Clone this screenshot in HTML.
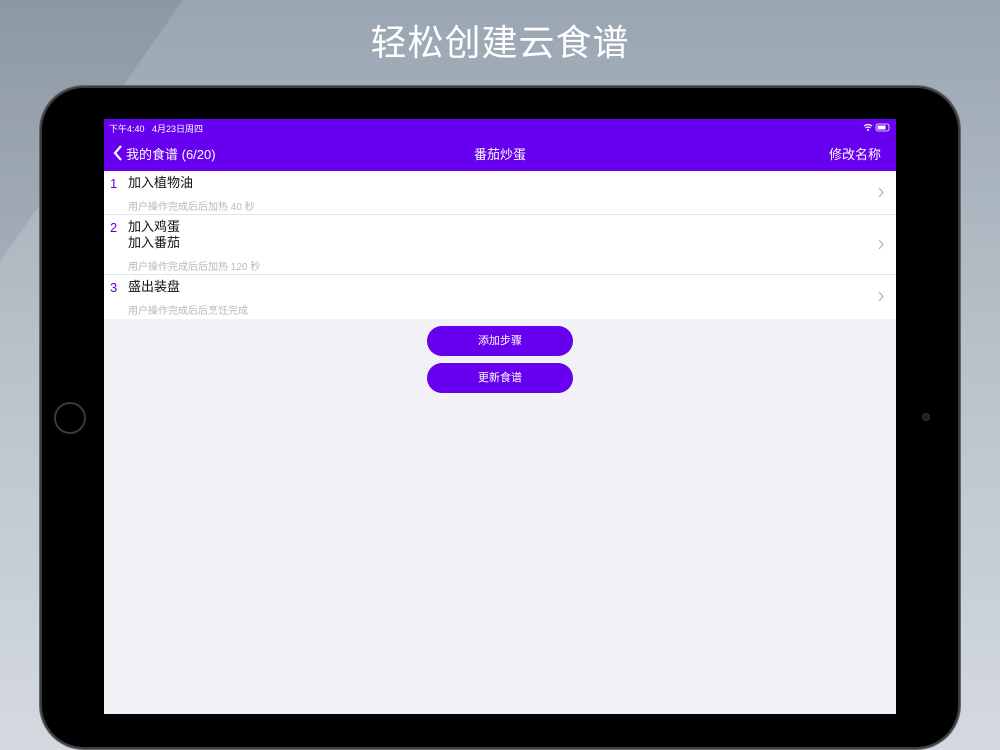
<!DOCTYPE html>
<html><head><meta charset="utf-8"><style>
*{margin:0;padding:0;box-sizing:border-box}
html,body{width:1000px;height:750px;overflow:hidden}
body{position:relative;font-family:"Liberation Sans","Noto Sans CJK SC",sans-serif;background:linear-gradient(180deg,#95a2ae 0%,#b4bec7 45%,#d2d8de 100%)}
.diag{position:absolute;left:0;top:0;width:1000px;height:750px;background:linear-gradient(125deg,rgba(0,0,0,0.06) 0,rgba(0,0,0,0.06) 12%,rgba(255,255,255,0.04) 12%,rgba(255,255,255,0.04) 100%)}
.title{position:absolute;top:14px;width:100%;text-align:center;color:#fff;font-size:36px;letter-spacing:1px}
.tab{position:absolute;left:40px;top:86px;width:920px;height:663px;background:#000;border-radius:44px;border:2px solid #3a3d42;box-shadow:0 0 0 1px #666}
.home{position:absolute;left:54px;top:402px;width:32px;height:32px;border-radius:50%;border:2px solid #3a3a3a}
.cam{position:absolute;left:922px;top:413px;width:8px;height:8px;border-radius:50%;background:#1a1f2a;border:1px solid #333}
.screen{position:absolute;left:104px;top:119px;width:792px;height:595px;background:#f1f1f6;overflow:hidden}
.nav{height:52px;background:#6600ee;color:#fff;position:relative}
.sb{position:absolute;top:3px;left:5px;font-size:9px}
.nav .l{position:absolute;left:22px;top:25px;font-size:13px}
.nav .c{position:absolute;width:100%;text-align:center;top:25px;font-size:13px}
.nav .r{position:absolute;right:15px;top:25px;font-size:13px}
.row{background:#fff;position:relative;border-bottom:1px solid #e4e4e8}
.num{position:absolute;left:6px;top:5px;color:#6600ee;font-size:13px}
.t{position:absolute;left:24px;top:4px;font-size:13px;color:#111;line-height:16px}
.s{position:absolute;left:24px;font-size:10px;color:#b8b8bc}
.chev{position:absolute;right:12px}
.btn{position:absolute;left:323px;width:146px;height:30px;border-radius:15px;background:#6600ee;color:#fff;text-align:center;line-height:30px;font-size:11px}
</style></head><body>
<div class="diag"></div>
<div class="title">轻松创建云食谱</div>
<div class="tab"></div>
<div class="home"></div><div class="cam"></div>
<div class="screen">
 <div class="nav">
  <div class="sb">下午4:40 &nbsp; 4月23日周四</div>
  <svg style="position:absolute;right:4px;top:4px" width="30" height="9"><path d="M2 3 Q6 0 10 3 M3.5 5 Q6 3 8.5 5" stroke="#fff" fill="none" stroke-width="1.2"/><circle cx="6" cy="7" r="1" fill="#fff"/><rect x="14" y="1" width="13" height="7" rx="2" fill="none" stroke="#fff" stroke-width="0.8"/><rect x="15.5" y="2.5" width="8" height="4" fill="#fff"/></svg>
  <svg style="position:absolute;left:9px;top:26px" width="10" height="16"><path d="M8 1 L2 8 L8 15" stroke="#fff" stroke-width="2.2" fill="none"/></svg>
  <div class="l">我的食谱 (6/20)</div>
  <div class="c">番茄炒蛋</div>
  <div class="r">修改名称</div>
 </div>
 <div class="row" style="height:44px"><div class="num">1</div><div class="t">加入植物油</div><div class="s" style="top:27px">用户操作完成后后加热 40 秒</div><svg class="chev" style="top:16px" width="6" height="11"><path d="M1 1 L5 5.5 L1 10" stroke="#b0b0b5" stroke-width="1.2" fill="none"/></svg></div>
 <div class="row" style="height:60px"><div class="num">2</div><div class="t">加入鸡蛋<br>加入番茄</div><div class="s" style="top:43px">用户操作完成后后加热 120 秒</div><svg class="chev" style="top:24px" width="6" height="11"><path d="M1 1 L5 5.5 L1 10" stroke="#b0b0b5" stroke-width="1.2" fill="none"/></svg></div>
 <div class="row" style="height:44px;border:0"><div class="num">3</div><div class="t">盛出装盘</div><div class="s" style="top:27px">用户操作完成后后烹饪完成</div><svg class="chev" style="top:16px" width="6" height="11"><path d="M1 1 L5 5.5 L1 10" stroke="#b0b0b5" stroke-width="1.2" fill="none"/></svg></div>
 <div class="btn" style="top:207px">添加步骤</div>
 <div class="btn" style="top:244px">更新食谱</div>
</div>
</body></html>
